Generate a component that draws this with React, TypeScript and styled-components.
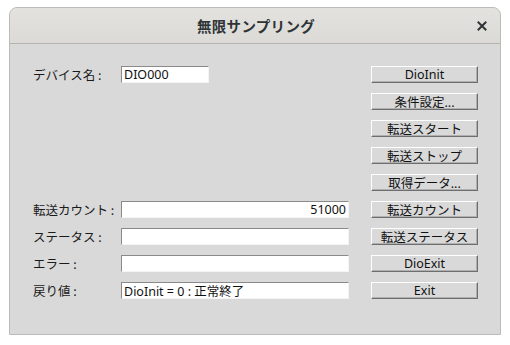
import React from 'react'
import styled, { createGlobalStyle } from 'styled-components'

const GlobalStyle = createGlobalStyle`
  html, body {
    margin: 0;
    padding: 0;
    background: #ffffff;
  }
  body {
    font-family: "Noto Sans", "Noto Sans CJK JP", sans-serif;
  }
`;

const Window = styled("div")`
  margin: 7px 0 0 9px;
  width: 492px;
  height: 328px;
  box-sizing: border-box;
  border: 1px solid #bdbbb7;
  border-radius: 8px 8px 0 0;
  background: #d9d9d9;
  overflow: hidden;
  display: flex;
  flex-direction: column;
`;

const TitleBar = styled("div")`
  position: relative;
  height: 35px;
  flex: none;
  display: flex;
  align-items: center;
  justify-content: center;
  background: linear-gradient(#e4e2df, #dcdad6);
  border-bottom: 1px solid #b6b4b0;
`;

const Title = styled("div")`
  font-family: "Noto Sans CJK JP", sans-serif;
  font-size: 14.5px;
  font-weight: 700;
  color: #2e3436;
  letter-spacing: 0.3px;
  padding-left: 2px;
`;

const CloseButton = styled("div")`
  position: absolute;
  right: 12px;
  top: 12px;
  width: 12px;
  height: 12px;
  display: flex;
  align-items: center;
  justify-content: center;
`;

const Body = styled("div")`
  padding: 22px 0 0 22px;
  display: grid;
  grid-template-columns: 89px 250px 107px;
  grid-auto-rows: 17px;
  row-gap: 10px;
`;

const Label = styled("div")`
  font-family: "Noto Sans CJK JP", sans-serif;
  font-size: 12.5px;
  color: #1a1a1a;
  display: flex;
  align-items: center;
  padding-left: 1px;
`;

const Field = styled("div")<{ $wide?: boolean; $right?: boolean }>`
  width: ${p => (p.$wide ? '228px' : '88px')};
  height: 17px;
  box-sizing: border-box;
  background: #ffffff;
  border-top: 1px solid #8a8a8a;
  border-left: 1px solid #8a8a8a;
  border-right: 1px solid #f4f4f4;
  border-bottom: 1px solid #f4f4f4;
  display: flex;
  align-items: center;
  justify-content: ${p => (p.$right ? 'flex-end' : 'flex-start')};
  padding: 0 2px;
  font-family: "Noto Sans", "Noto Sans CJK JP", sans-serif;
  font-size: 12.5px;
  color: #111111;
  white-space: nowrap;
`;

const Button = styled("div")`
  width: 107px;
  height: 17px;
  box-sizing: border-box;
  background: #d9d9d9;
  border-top: 1px solid #ffffff;
  border-left: 1px solid #ffffff;
  border-right: 1px solid #6e6e6e;
  border-bottom: 1px solid #6e6e6e;
  box-shadow: inset -1px -1px 0 #b0b0b0;
  display: flex;
  align-items: center;
  justify-content: center;
  font-family: "Noto Sans", "Noto Sans CJK JP", sans-serif;
  font-size: 12.5px;
  color: #111111;
  white-space: nowrap;
`;

type Row = {
  label?: string
  value?: string
  wide?: boolean
  right?: boolean
  button: string
}

const rows: Row[] = [
  { label: 'デバイス名 :', value: 'DIO000', button: 'DioInit' },
  { button: '条件設定...' },
  { button: '転送スタート' },
  { button: '転送ストップ' },
  { button: '取得データ...' },
  { label: '転送カウント :', value: '51000', wide: true, right: true, button: '転送カウント' },
  { label: 'ステータス :', value: '', wide: true, button: '転送ステータス' },
  { label: 'エラー :', value: '', wide: true, button: 'DioExit' },
  { label: '戻り値 :', value: 'DioInit = 0 : 正常終了', wide: true, button: 'Exit' },
];

const App = () => {
  return (
    <>
      <GlobalStyle />
      <Window>
        <TitleBar>
          <Title>無限サンプリング</Title>
          <CloseButton>
            <svg width="10" height="10" viewBox="0 0 10 10">
              <path d="M1.5 1.5 L8.5 8.5 M8.5 1.5 L1.5 8.5" stroke="#2e3436" strokeWidth="2" strokeLinecap="square" />
            </svg>
          </CloseButton>
        </TitleBar>
        <Body>
          {rows.map((row, i) => (
            <React.Fragment key={i}>
              <Label>{row.label}</Label>
              <div>
                {row.value !== undefined && (
                  <Field $wide={row.wide} $right={row.right}>{row.value}</Field>
                )}
              </div>
              <Button>{row.button}</Button>
            </React.Fragment>
          ))}
        </Body>
      </Window>
    </>
  )
}

export default App
